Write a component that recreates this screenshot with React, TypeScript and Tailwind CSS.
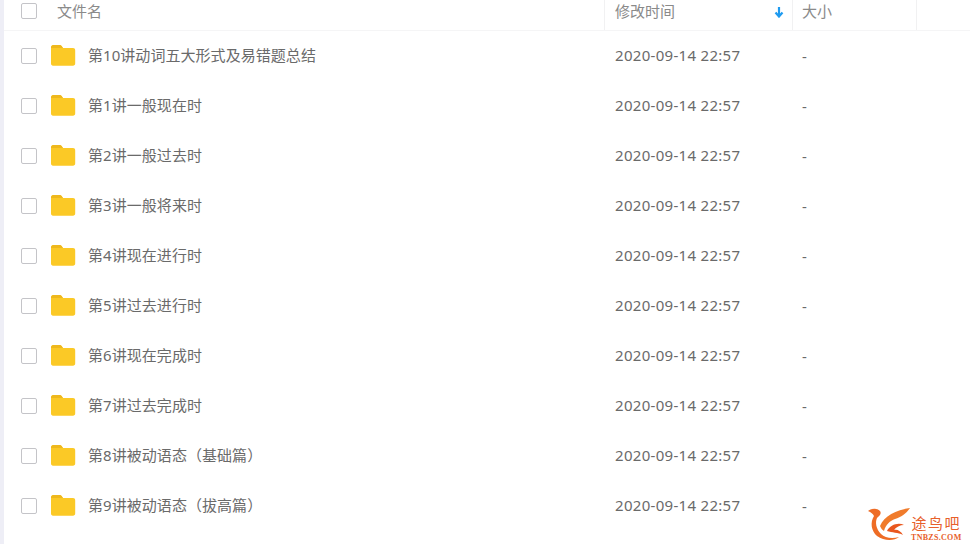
import React from 'react';

const rows = [
  '第10讲动词五大形式及易错题总结',
  '第1讲一般现在时',
  '第2讲一般过去时',
  '第3讲一般将来时',
  '第4讲现在进行时',
  '第5讲过去进行时',
  '第6讲现在完成时',
  '第7讲过去完成时',
  '第8讲被动语态（基础篇）',
  '第9讲被动语态（拔高篇）',
];

const FolderIcon: React.FC = () => (
  <svg width="26" height="22" viewBox="0 0 26 22" className="block shrink-0">
    <path d="M1 3.5C1 2 2 1 3.5 1h6c1 0 1.7.4 2.3 1.2L13 4h10c1.300 0 2.200.9 2.200 2.200v13.400c0 1.300-.9 2.200-2.200 2.200H3c-1.200 0-2-.9-2-2.200z" fill="#fbc926" />
    <path d="M1 3.500C1 2 2 1 3.500 1h6c1 0 1.700.4 2.300 1.200L13 4H1z" fill="#eeb81d" />
  </svg>
);

const Checkbox: React.FC = () => (
  <span className="block h-4 w-4 shrink-0 rounded-[2px] border border-[#c4c4c8] bg-white" />
);

const Logo: React.FC = () => (
  <div className="absolute left-[868px] top-[507px] flex items-start">
    <svg width="42" height="34" viewBox="0 0 42 34" className="shrink-0">
      <path d="M0 4C4 1 9 1 12 4c2 3-1 5-3 7-2 4-1 11 4 16 4 4 11 5 18 3-5 4-15 4-22-1C3 24 2 15 6 9 5 7 3 5 0 4z" fill="#ee6c25" />
      <path d="M12 19C16 9 28 3 42 1c-4 6-9 9-15 11-5 2-9 5-11 12-2-1-3-3-4-5z" fill="#f07b2b" />
      <path d="M19 24c3-6 11-9 17-6-4 0-8 2-10 5 3-1 7 1 9 5-5-3-11-2-16-4z" fill="#e9571e" />
    </svg>
    <div className="ml-[1px] flex flex-col items-center pt-[9px] font-['Liberation_Serif','Noto_Sans_CJK_SC',serif] text-[#e7602a]">
      <span className="text-[15px] leading-[17px] tracking-[1.5px]">途鸟吧</span>
      <span className="text-[8px] font-bold leading-[9px] tracking-[0.3px]">TNBZS.COM</span>
    </div>
  </div>
);

const App: React.FC = () => {
  return (
    <div className="relative h-[544px] w-[970px] overflow-hidden bg-white pl-[4px] font-['Noto_Sans','Noto_Sans_CJK_SC',sans-serif] text-[15px] text-[#6a6a6a]">
      <div className="absolute inset-y-0 left-0 w-[4px] bg-[#eeeef6]" />

      <div className="flex h-[31px] items-start border-b border-[#f5f5f6] text-[#8a8a8a]">
        <div className="flex h-[22px] w-[600px] items-center pl-[17px]">
          <Checkbox />
          <span className="ml-[20px]">文件名</span>
        </div>
        <div className="relative flex h-full w-[188px] items-start border-l border-[#f1f1f2] pl-[10px]">
          <span className="flex h-[22px] items-center">修改时间</span>
          <svg width="10" height="12" viewBox="0 0 10 12" className="absolute left-[169px] top-[6px]">
            <path d="M5 1v9M1.500 6.500 5 10.500l3.500-4" fill="none" stroke="#1e9bf0" strokeWidth="2.200" />
          </svg>
        </div>
        <div className="flex h-full w-[125px] items-start border-x border-[#f1f1f2] pl-[9px]">
          <span className="flex h-[22px] items-center">大小</span>
        </div>
      </div>

      {rows.map((name) => (
        <div key={name} className="flex h-[50px] items-center">
          <div className="flex w-[600px] items-center pl-[17px]">
            <Checkbox />
            <span className="ml-[13px] -translate-y-[1px]"><FolderIcon /></span>
            <span className="ml-[12px] -translate-y-[1px] whitespace-nowrap tracking-[0.05px]">{name}</span>
          </div>
          <div className="w-[188px] -translate-y-[1px] pl-[11px] tracking-[0.3px]">2020-09-14 22:57</div>
          <div className="pl-[10px]">-</div>
        </div>
      ))}

      <Logo />
    </div>
  );
};

export default App;
